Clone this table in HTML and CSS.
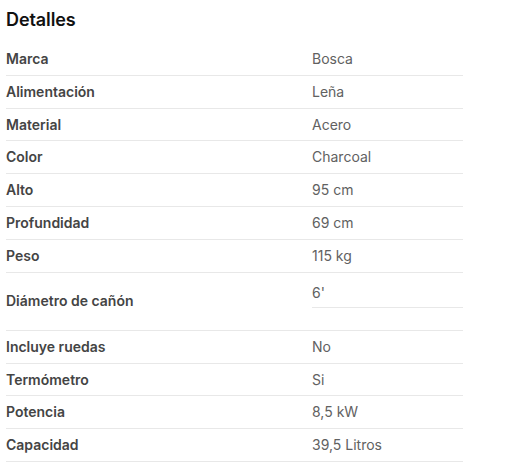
FILE: index.html
```html
<!DOCTYPE html>
<html lang="es">
<head>
<meta charset="utf-8">
<link rel="stylesheet" href="styles.css">
</head>
<body>
<section class="details">
  <h2 class="title">Detalles</h2>
  <div class="table">
    <div class="row"><div class="label">Marca</div><div class="value">Bosca</div></div>
    <div class="row"><div class="label">Alimentación</div><div class="value">Leña</div></div>
    <div class="row"><div class="label">Material</div><div class="value">Acero</div></div>
    <div class="row"><div class="label">Color</div><div class="value">Charcoal</div></div>
    <div class="row"><div class="label">Alto</div><div class="value">95 cm</div></div>
    <div class="row"><div class="label">Profundidad</div><div class="value">69 cm</div></div>
    <div class="row"><div class="label">Peso</div><div class="value">115 kg</div></div>
    <div class="row tall"><div class="label">Diámetro de cañón</div><div class="value"><p class="boxed">6'</p></div></div>
    <div class="row"><div class="label">Incluye ruedas</div><div class="value">No</div></div>
    <div class="row"><div class="label">Termómetro</div><div class="value">Si</div></div>
    <div class="row"><div class="label">Potencia</div><div class="value">8,5 kW</div></div>
    <div class="row"><div class="label">Capacidad</div><div class="value">39,5 Litros</div></div>
  </div>
</section>
</body>
</html>
```
FILE: styles.css
```css
html, body {
  margin: 0;
  padding: 0;
  background: #ffffff;
}
body {
  font-family: Inter, "Open Sans", sans-serif;
}
.details {
  padding: 6px 0 0 6px;
  width: 457px;
}
.title {
  margin: 0;
  height: 37px;
  font-size: 18px;
  line-height: 28px;
  font-weight: 600;
  color: #111111;
  letter-spacing: -0.1px;
}
.table {
  display: flex;
  flex-direction: column;
}
.row {
  display: grid;
  grid-template-columns: 306px 151px;
  border-bottom: 1px solid #e8e8e8;
  height: 31.83px;
  align-items: center;
}
.label {
  font-size: 14px;
  font-weight: 600;
  color: #444444;
  line-height: 24px;
}
.value {
  font-size: 14px;
  font-weight: 400;
  color: #616161;
  line-height: 24px;
}
.row.tall {
  height: 57px;
}
.row.tall .value {
  align-self: start;
}
.boxed {
  margin: 0;
  padding: 8px 0 2px;
  line-height: 24px;
  border-bottom: 1px solid #e8e8e8;
}
```
